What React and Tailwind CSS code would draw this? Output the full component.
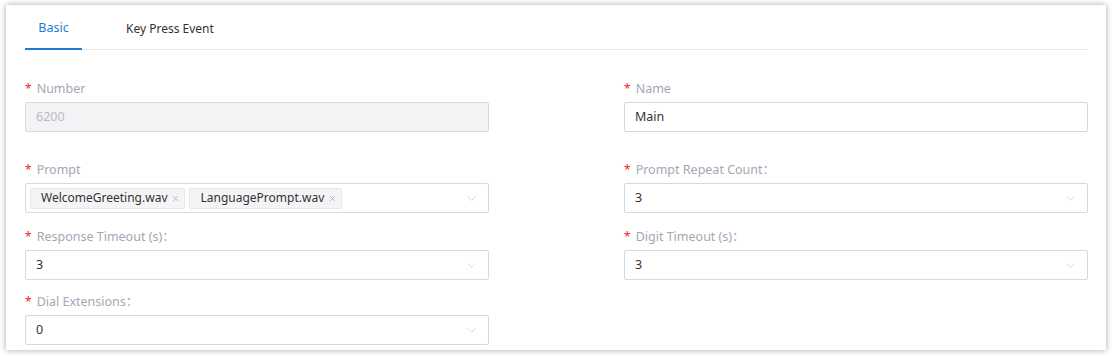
import React from 'react';
import { ChevronDown, X } from 'lucide-react';

const Label = ({ children }) => (
    <div className="h-[20px] mb-[4px] pt-[2px] flex items-center text-[12.5px] text-[#a3a7b3] leading-none">
        <span className="text-[#f5222d] mr-[5px] text-[12px]">*</span>
        <span>{children}</span>
    </div>
);

const Chevron = () => (
    <ChevronDown size={15} strokeWidth={1.1} className="text-[#c3c6cf] shrink-0" />
);

const SelectBox = ({ value }) => (
    <div className="h-[30px] border border-[#d7d9e1] rounded-[2px] bg-white flex items-center justify-between pl-[10px] pr-[9px] text-[12.5px] text-[#333]">
        <span>{value}</span>
        <Chevron />
    </div>
);

const Tag = ({ children }) => (
    <div className="h-[21px] bg-[#f4f4f6] border border-[#e6e7ec] rounded-[2px] flex items-center pl-[10px] pr-[4px] text-[12px] text-[#333] gap-[4px]">
        <span>{children}</span>
        <X size={9} strokeWidth={1.5} className="text-[#8d9099]" />
    </div>
);

const App = () => {
    return (
        <div className="w-[1112px] h-[356px] bg-white pt-[5px] pl-[6px]" style={{ fontFamily: '"Noto Sans", "Noto Sans CJK SC", sans-serif' }}>
            <div className="w-[1100px] h-[345px] bg-white shadow-[0_0_6px_rgba(0,0,0,0.35)] pl-[19px] pr-[18px]">
                {/* tabs */}
                <div className="flex h-[45px] pt-[3px] border-b border-[#e8e8ec]">
                    <div className="w-[57px] flex items-center justify-center text-[12.5px] text-[#1a7fd4] border-b-2 border-[#1a7fd4] -mb-[1px]">
                        Basic
                    </div>
                    <div className="ml-[44px] flex items-center text-[12px] text-[#333]">
                        Key Press Event
                    </div>
                </div>

                <div className="grid grid-cols-[464px_464px] gap-x-[135px] mt-[28px]">
                    <div>
                        <Label>Number</Label>
                        <div className="h-[30px] border border-[#d7d9e1] rounded-[2px] bg-[#f3f3f5] flex items-center pl-[10px] text-[12.5px] text-[#b9bbc1]">
                            6200
                        </div>
                    </div>
                    <div>
                        <Label>Name</Label>
                        <div className="h-[30px] border border-[#d7d9e1] rounded-[2px] bg-white flex items-center pl-[10px] text-[12.5px] text-[#333]">
                            Main
                        </div>
                    </div>

                    <div className="mt-[27px]">
                        <Label>Prompt</Label>
                        <div className="h-[30px] border border-[#d7d9e1] rounded-[2px] bg-white flex items-center justify-between pl-[4px] pr-[9px]">
                            <div className="flex gap-[4px]">
                                <Tag>WelcomeGreeting.wav</Tag>
                                <Tag>LanguagePrompt.wav</Tag>
                            </div>
                            <Chevron />
                        </div>
                    </div>
                    <div className="mt-[27px]">
                        <Label>Prompt Repeat Count：</Label>
                        <SelectBox value="3" />
                    </div>

                    <div className="mt-[13px]">
                        <Label>Response Timeout (s)：</Label>
                        <SelectBox value="3" />
                    </div>
                    <div className="mt-[13px]">
                        <Label>Digit Timeout (s)：</Label>
                        <SelectBox value="3" />
                    </div>

                    <div className="mt-[11px]">
                        <Label>Dial Extensions：</Label>
                        <SelectBox value="0" />
                    </div>
                </div>
            </div>
        </div>
    );
};

export default App;
